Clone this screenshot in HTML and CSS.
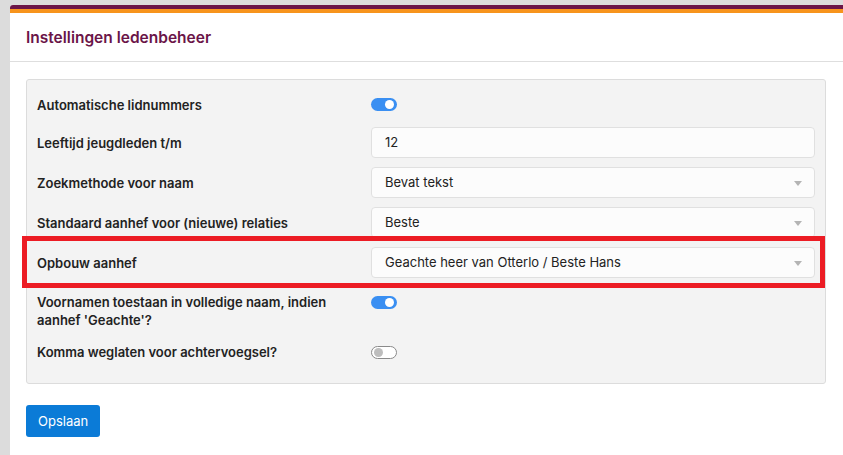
FILE: index.html
```html
<!DOCTYPE html>
<html lang="nl">
<head>
<meta charset="utf-8">
<title>Instellingen ledenbeheer</title>
<link rel="stylesheet" href="styles.css">
</head>
<body>
<div class="page">
  <div class="card">
    <div class="stripe-purple"></div>
    <div class="stripe-orange"></div>
    <div class="card-header"><h1 class="title">Instellingen ledenbeheer</h1></div>
    <div class="card-body">
      <div class="panel">
        <div class="row row-toggle first">
          <label class="label">Automatische lidnummers</label>
          <div class="control"><span class="switch on"><span class="knob"></span></span></div>
        </div>
        <div class="row row-input">
          <label class="label">Leeftijd jeugdleden t/m</label>
          <div class="control"><div class="field">12</div></div>
        </div>
        <div class="row row-input">
          <label class="label">Zoekmethode voor naam</label>
          <div class="control"><div class="field select">Bevat tekst<span class="caret"></span></div></div>
        </div>
        <div class="row row-input">
          <label class="label">Standaard aanhef voor (nieuwe) relaties</label>
          <div class="control"><div class="field select">Beste<span class="caret"></span></div></div>
        </div>
        <div class="row row-input highlighted">
          <label class="label">Opbouw aanhef</label>
          <div class="control"><div class="field select">Geachte heer van Otterlo / Beste Hans<span class="caret"></span></div></div>
          <div class="highlight-box"></div>
        </div>
        <div class="row row-multi">
          <label class="label">Voornamen toestaan in volledige naam, indien aanhef 'Geachte'?</label>
          <div class="control"><span class="switch on"><span class="knob"></span></span></div>
        </div>
        <div class="row row-toggle">
          <label class="label">Komma weglaten voor achtervoegsel?</label>
          <div class="control"><span class="switch off"><span class="knob"></span></span></div>
        </div>
      </div>
      <button class="btn">Opslaan</button>
    </div>
  </div>
</div>
</body>
</html>
```

FILE: styles.css
```css
* { box-sizing: border-box; }
html, body { margin: 0; padding: 0; }
body {
  background: #dcdcdc;
  font-family: Inter, "Noto Sans", "Liberation Sans", sans-serif;
  color: #222;
  width: 843px;
  height: 455px;
  overflow: hidden;
}
.page {
  padding: 5px 0 0 10px;
}
.card {
  background: #fff;
  border-top-left-radius: 3px;
  overflow: hidden;
  height: 460px;
  width: 850px;
}
.stripe-purple { height: 4px; background: #6b1548; }
.stripe-orange { height: 4px; background: #f7941d; }
.card-header {
  height: 49px;
  border-bottom: 1px solid #dedede;
  display: flex;
  align-items: center;
  padding-left: 16px;
}
.title {
  margin: 0;
  font-size: 15.5px;
  font-weight: 600;
  color: #6b1548;
  letter-spacing: 0;
}
.card-body {
  padding: 17px 0 0 16px;
}
.panel {
  width: 800px;
  background: #f3f3f3;
  border: 1px solid #dcdcdc;
  border-radius: 3px;
  padding: 11px 10px 17px 10px;
  display: flex;
  flex-direction: column;
}
.row {
  display: grid;
  grid-template-columns: 334px 1fr;
  position: relative;
}
.row + .row { margin-top: 9px; }
.label {
  font-size: 13px;
  font-weight: 600;
  line-height: 18px;
  color: #222;
  padding-right: 20px;
}
.row-toggle { height: 28px; align-items: center; }
.row-toggle.first { height: 27px; }
.row-input { height: 31px; align-items: center; }
.row-multi { padding-top: 6px; align-items: start; }
.row-multi .control { padding-top: 3px; }
.control { display: flex; align-items: center; }
.field {
  width: 100%;
  height: 31px;
  background: #fcfcfc;
  border: 1px solid #e0e0e0;
  border-radius: 4px;
  font-size: 13px;
  line-height: 29px;
  padding-left: 13px;
  color: #222;
  position: relative;
}
.caret {
  position: absolute;
  right: 12px;
  top: 13px;
  width: 0;
  height: 0;
  border-left: 4px solid transparent;
  border-right: 4px solid transparent;
  border-top: 5px solid #b4b4b4;
}
.switch {
  display: inline-block;
  width: 26px;
  height: 13px;
  border-radius: 7px;
  position: relative;
}
.switch.on { background: #3a8ff2; }
.switch.off { background: #fff; border: 1px solid #8a8a8a; }
.knob {
  position: absolute;
  width: 9px;
  height: 9px;
  border-radius: 50%;
  top: 2px;
}
.switch.on .knob { right: 3px; background: #fff; }
.switch.off .knob { left: 2px; top: 1px; background: #bdbdbd; }
.highlight-box {
  position: absolute;
  left: -15px;
  right: -10px;
  top: -11px;
  bottom: -10px;
  border: 5px solid #ec1c24;
  pointer-events: none;
}
.btn {
  margin-top: 21px;
  height: 32px;
  padding: 0 12px;
  background: #0b7bd7;
  color: #fff;
  border: none;
  border-radius: 3px;
  font-family: Inter, "Noto Sans", "Liberation Sans", sans-serif;
  font-size: 13px;
  font-weight: 400;
}
```
